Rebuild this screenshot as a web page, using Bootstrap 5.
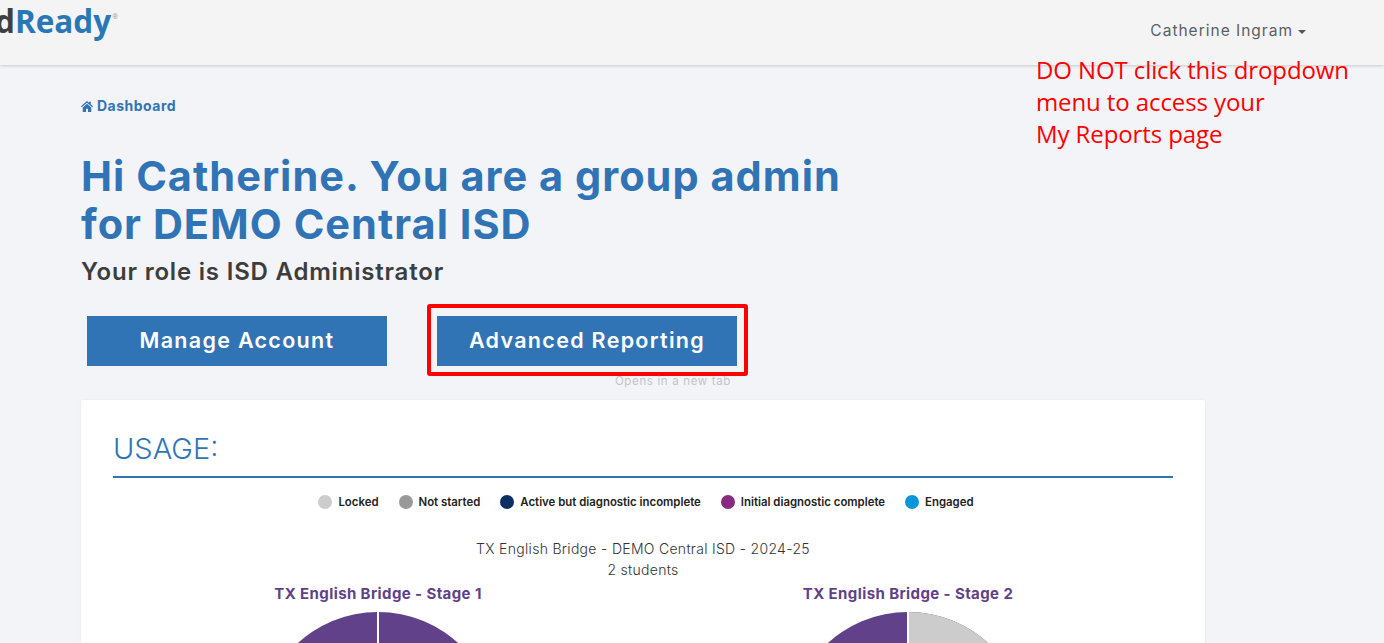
<!DOCTYPE html>
<html lang="en"><head><meta charset="utf-8"><title>Dashboard</title>
<link href="https://cdn.jsdelivr.net/npm/bootstrap@5.3.0/dist/css/bootstrap.min.css" rel="stylesheet">
<style>
html,body{height:643px;overflow:hidden}
body{background:#f2f4f8;font-family:Inter,"Liberation Sans",sans-serif;color:#3d3d3d}
.topbar{height:65px;background:#f4f4f4;box-shadow:0 1px 3px rgba(0,0,0,.18);padding:0 78px 0 0;align-items:flex-start}
.brand-logo{font-family:"Open Sans",sans-serif;font-weight:700;font-size:31.5px;line-height:40px;margin-left:-5px;margin-top:1px;color:#3f3f3f;text-decoration:none}
.brand-logo b{color:#2878b8;font-weight:700}
.brand-logo sup{font-size:7px;color:#999;top:-14px;vertical-align:baseline;position:relative;margin-left:1px;font-weight:400}
.user-menu{font-size:15.5px;letter-spacing:1px;color:#5a5f66;margin-top:21px;line-height:19px;text-decoration:none}
.user-caret{display:inline-block;border-top:4px solid #555;border-left:4px solid transparent;border-right:4px solid transparent;margin-left:5px;vertical-align:middle}
.note-red{position:absolute;left:1036px;top:54px;color:#f00;font-family:"Open Sans",sans-serif;font-size:24px;line-height:32px;letter-spacing:-.1px}
.page-main{padding:0 0 0 81px;width:1205px}
.crumb{color:#3174b5;font-weight:700;font-size:14px;letter-spacing:.5px;margin-top:32px;line-height:18px;text-decoration:none;display:flex;align-items:center;gap:4px}
.crumb svg{width:12px;height:11px}
.hello{color:#3174b5;font-weight:700;font-size:41.5px;letter-spacing:1.02px;line-height:48px;margin:37px 0 0;width:775px}
.role{font-size:24px;letter-spacing:.8px;font-weight:600;line-height:28px;margin:10px 0 0;color:#3d3d3d}
.btn-row{margin-top:18px;padding-left:6px;gap:40px;height:96px;align-items:flex-start}
.btn-blue{width:300px;height:50px;margin-top:12px;border-radius:0;background:#3174b5;color:#fff;border:0;font-weight:600;font-size:21.5px;line-height:49px;padding:0;letter-spacing:1.3px}
.btn-blue:hover{background:#3174b5;color:#fff}
.box-red{border:4px solid #f00;border-radius:3px;padding:8px 7px 6px 6px;width:321px;height:72px}
.box-red .btn-blue{margin-top:0}
.new-tab{color:#c4c4c4;font-size:11.5px;letter-spacing:.65px;line-height:14px;text-align:right;margin-top:-2px;padding-right:17px}
.usage-card{background:#fff;border:0;border-radius:2px;box-shadow:0 0 3px rgba(0,0,0,.06);padding:26px 32px 0;height:300px;overflow:hidden}
.usage-title{font-weight:300;font-size:29px;line-height:44px;color:#3174b5;margin:1px 0 0;padding-bottom:5px;border-bottom:2px solid #3174b5}
.legend-row{gap:20px;margin-top:16px;font-size:11.4px;font-weight:600;color:#222;line-height:16px;padding-left:6px}
.legend-item{gap:6px}
.dot-mark{width:14px;height:14px;border-radius:50%}
.chart-caption{font-size:14px;letter-spacing:.3px;font-weight:300;color:#333;line-height:21px;text-align:center;margin-top:28px}
.pie-row{margin-top:4px;justify-content:center;gap:130px}
.pie-col{width:400px;text-align:center}
.pie-name{color:#5f4189;font-weight:700;font-size:15px;letter-spacing:.4px;line-height:20px;margin-bottom:7px}
.pie-svg{width:240px;height:240px;display:block;margin:0 auto}
</style></head>
<body>
<nav class="navbar topbar d-flex justify-content-between">
  <a class="brand-logo" href="#">d<b>Ready</b><sup>®</sup></a>
  <a class="user-menu" href="#">Catherine Ingram<span class="user-caret"></span></a>
</nav>
<div class="note-red">DO NOT click this dropdown<br>menu to access your<br>My Reports page</div>
<main class="page-main">
  <a class="crumb" href="#"><svg viewBox="0 0 24 22"><path fill="#3174b5" d="M12 0 0 10.500l1.500 1.800L12 3.300l10.500 9L24 10.500l-4.500-3.900V1.500h-3.500v2.100zM3.500 13V22H10v-6.500h4V22h6.500V13L12 5.700z"/></svg>Dashboard</a>
  <h1 class="hello">Hi Catherine. You are a group admin for DEMO Central ISD</h1>
  <p class="role">Your role is ISD Administrator</p>
  <div class="d-flex btn-row">
    <a class="btn btn-blue" href="#">Manage Account</a>
    <div>
      <div class="box-red"><a class="btn btn-blue" href="#">Advanced Reporting</a></div>
      <div class="new-tab">Opens in a new tab</div>
    </div>
  </div>
  <section class="card usage-card">
    <h2 class="usage-title">USAGE:</h2>
    <div class="d-flex justify-content-center legend-row">
      <span class="d-flex align-items-center legend-item"><i class="dot-mark" style="background:#ccc"></i>Locked</span>
      <span class="d-flex align-items-center legend-item"><i class="dot-mark" style="background:#999"></i>Not started</span>
      <span class="d-flex align-items-center legend-item"><i class="dot-mark" style="background:#0a2f63"></i>Active but diagnostic incomplete</span>
      <span class="d-flex align-items-center legend-item"><i class="dot-mark" style="background:#862a82"></i>Initial diagnostic complete</span>
      <span class="d-flex align-items-center legend-item"><i class="dot-mark" style="background:#0a95d8"></i>Engaged</span>
    </div>
    <div class="chart-caption">TX English Bridge - DEMO Central ISD - 2024-25<br>2 students</div>
    <div class="d-flex pie-row">
      <div class="pie-col">
        <div class="pie-name">TX English Bridge - Stage 1</div>
        <svg class="pie-svg" viewBox="0 0 240 240"><circle cx="120" cy="120" r="119" fill="#60418a"/><rect x="119" y="0" width="2" height="240" fill="#fff"/></svg>
      </div>
      <div class="pie-col">
        <div class="pie-name">TX English Bridge - Stage 2</div>
        <svg class="pie-svg" viewBox="0 0 240 240"><circle cx="120" cy="120" r="119" fill="#60418a"/><path d="M120 120V1A119 119 0 0 1 239 120z" fill="#ccc"/><rect x="119" y="0" width="2" height="240" fill="#fff"/></svg>
      </div>
    </div>
  </section>
</main>
<script src="https://cdn.jsdelivr.net/npm/bootstrap@5.3.0/dist/js/bootstrap.bundle.min.js"></script>
</body></html>
